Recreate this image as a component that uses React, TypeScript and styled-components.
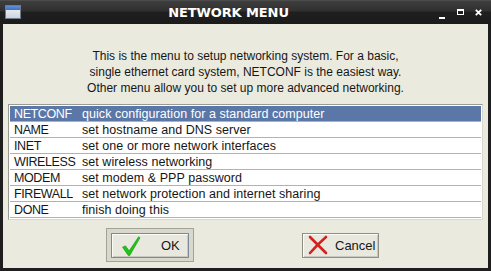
import React from "react";
import styled, { createGlobalStyle } from "styled-components";

const Global = createGlobalStyle`
  html, body { margin: 0; padding: 0; background: #1c1c1c; }
  body { width: 491px; height: 271px; overflow: hidden; }
`;

const Window = styled.div`
  width: 491px;
  height: 271px;
  display: flex;
  flex-direction: column;
  background: #1e1e1e;
  box-sizing: border-box;
`;

const TitleBar = styled.div`
  height: 24px;
  flex: none;
  display: flex;
  align-items: center;
  padding: 0 4px 0 5px;
  background: linear-gradient(#5a5a5a 0px, #3e3e3e 1px, #303030 11px, #1f1f1f 12px, #1b1b1b 24px);
`;

const AppIcon = styled.div`
  width: 16px;
  height: 14px;
  margin-right: 3px;
  box-sizing: border-box;
  border: 1px solid #6f7c8e;
  background: linear-gradient(#5f8fd6 0px, #3e6fb8 4px, #e6eaf0 4px, #c9cfd8 14px);
`;

const Title = styled.div`
  flex: 1;
  text-align: center;
  color: #ffffff;
  font-family: "DejaVu Sans", sans-serif;
  font-weight: bold;
  font-size: 13px;
  letter-spacing: -0.1px;
`;

const Controls = styled.div`
  display: flex;
`;

const Ctl = styled.div`
  width: 18px;
  height: 24px;
  display: flex;
  align-items: center;
  justify-content: center;
`;

const Content = styled.div`
  flex: 1;
  margin: 0 3px 3px 3px;
  background: #ebeadf;
  display: flex;
  flex-direction: column;
  font-family: "Liberation Sans", Arial, sans-serif;
  color: #161616;
`;

const Intro = styled.div`
  padding-top: 24px;
  text-align: center;
  font-size: 12px;
  line-height: 16px;
`;

const List = styled.div`
  margin: 8px 5px 0 5px;
  border: 1px solid #9a9a92;
  border-right-color: #d8d8d0;
  border-bottom-color: #d8d8d0;
  padding: 1px;
  background: #ffffff;
  box-shadow: inset 1px 1px 0 #ffffff;
`;

const Row = styled.div<{ $selected?: boolean }>`
  height: 15px;
  display: flex;
  align-items: center;
  border-bottom: 1px solid #b3b3ab;
  background: ${(p) => (p.$selected ? "#5a77a8" : "#ffffff")};
  color: ${(p) => (p.$selected ? "#ffffff" : "#161616")};
  font-size: 12.5px;
  white-space: nowrap;
`;

const Key = styled.span`
  width: 68px;
  padding-left: 4px;
  flex: none;
  letter-spacing: -0.4px;
`;

const Desc = styled.span`
  letter-spacing: 0.05px;
`;

const ButtonRow = styled.div`
  display: flex;
  justify-content: center;
  align-items: center;
  gap: 108px;
  padding: 8px 6px 0 0;
`;

const DefaultFrame = styled.div`
  width: 88px;
  height: 34px;
  box-sizing: border-box;
  padding: 4px 4px;
  border: 1px solid #a3a39b;
  background: #d9d8cd;
`;

const Button = styled.div<{ $w: number; $focus?: boolean; $pl: number; $gap: number }>`
  width: ${(p) => p.$w}px;
  height: 25px;
  box-sizing: border-box;
  display: flex;
  align-items: center;
  gap: ${(p) => p.$gap}px;
  padding-left: ${(p) => p.$pl}px;
  border: 1px solid ${(p) => (p.$focus ? "#7d889a" : "#8f8f87")};
  background: #e9e8de;
  box-shadow: inset 1px 1px 0 #fbfbf6, inset -1px -1px 0 #c9c8be;
  font-size: 13px;
  color: #161616;
`;

const CheckIcon = () => (
  <svg width="20" height="20" viewBox="0 0 20 20">
    <path d="M1.5 11.2 L4.4 9.8 L8.2 14.8 L17.6 0.8 L19 1.8 L8.8 19.4 L7.2 19.4 Z" fill="#22c21c" stroke="#129a10" strokeWidth="0.6" strokeLinejoin="round" />
  </svg>
);

const CrossIcon = () => (
  <svg width="20" height="20" viewBox="0 0 20 20">
    <path d="M2 2 Q9 9 18 18" stroke="#d32020" strokeWidth="2.6" fill="none" strokeLinecap="round" />
    <path d="M18 2 Q10 9 2 18" stroke="#d32020" strokeWidth="2.6" fill="none" strokeLinecap="round" />
  </svg>
);

const items: [string, string][] = [
  ["NETCONF", "quick configuration for a standard computer"],
  ["NAME", "set hostname and DNS server"],
  ["INET", "set one or more network interfaces"],
  ["WIRELESS", "set wireless networking"],
  ["MODEM", "set modem & PPP password"],
  ["FIREWALL", "set network protection and internet sharing"],
  ["DONE", "finish doing this"],
];

export default function App() {
  return (
    <>
      <Global />
      <Window>
        <TitleBar>
          <AppIcon />
          <Title>NETWORK MENU</Title>
          <Controls>
            <Ctl>
              <svg width="6" height="14" viewBox="0 0 6 14">
                <rect x="0" y="12" width="6" height="2" fill="#ffffff" />
              </svg>
            </Ctl>
            <Ctl>
              <svg width="7" height="6" viewBox="0 0 7 6">
                <rect x="0.5" y="0.5" width="6" height="5" fill="none" stroke="#ffffff" strokeWidth="1" />
                <rect x="0" y="0" width="7" height="2" fill="#ffffff" />
              </svg>
            </Ctl>
            <Ctl>
              <svg width="7" height="7" viewBox="0 0 7 7">
                <path d="M0.8 0.8 L6.2 6.2 M6.2 0.8 L0.8 6.2" stroke="#ffffff" strokeWidth="1.8" />
              </svg>
            </Ctl>
          </Controls>
        </TitleBar>
        <Content>
          <Intro>
            This is the menu to setup networking system. For a basic,
            <br />
            single ethernet card system, NETCONF is the easiest way.
            <br />
            Other menu allow you to set up more advanced networking.
          </Intro>
          <List>
            {items.map(([k, d], i) => (
              <Row key={k} $selected={i === 0}>
                <Key>{k}</Key>
                <Desc>{d}</Desc>
              </Row>
            ))}
          </List>
          <ButtonRow>
            <DefaultFrame>
              <Button $w={78} $focus $pl={9} $gap={20}>
                <CheckIcon />
                OK
              </Button>
            </DefaultFrame>
            <Button $w={77} $pl={5} $gap={7}>
              <CrossIcon />
              Cancel
            </Button>
          </ButtonRow>
        </Content>
      </Window>
    </>
  );
}
